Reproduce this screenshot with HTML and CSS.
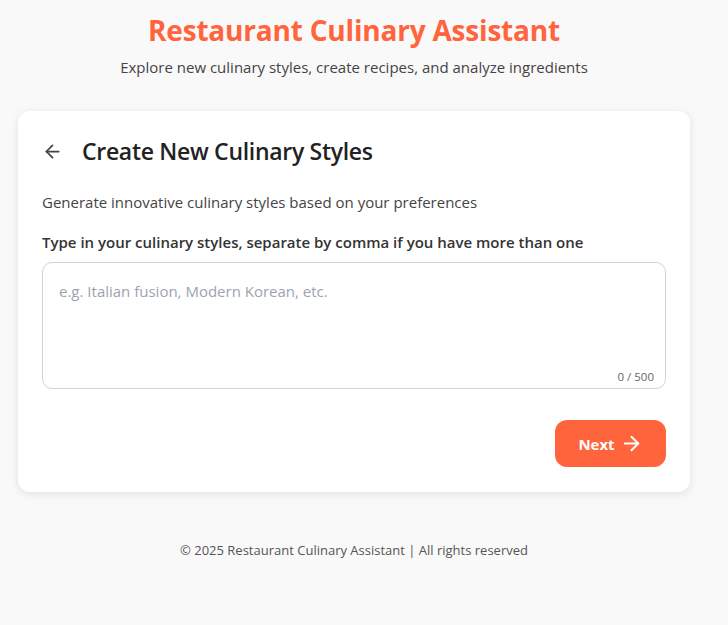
FILE: index.html
```html
<!DOCTYPE html>
<html lang="en">
<head>
<meta charset="utf-8">
<title>Restaurant Culinary Assistant</title>
<link rel="stylesheet" href="styles.css">
</head>
<body>
<div class="page">
  <header class="header">
    <h1 class="title">Restaurant Culinary Assistant</h1>
    <p class="subtitle">Explore new culinary styles, create recipes, and analyze ingredients</p>
  </header>
  <main class="card">
    <div class="card-head">
      <button class="back" aria-label="Back">
        <svg width="21" height="21" viewBox="0 0 24 24" fill="none" stroke="#444" stroke-width="2" stroke-linecap="round" stroke-linejoin="round"><path d="M19 12H5"/><path d="M12 19l-7-7 7-7"/></svg>
      </button>
      <h2 class="card-title">Create New Culinary Styles</h2>
    </div>
    <p class="desc">Generate innovative culinary styles based on your preferences</p>
    <label class="label" for="styles">Type in your culinary styles, separate by comma if you have more than one</label>
    <div class="field">
      <textarea id="styles" class="input" placeholder="e.g. Italian fusion, Modern Korean, etc."></textarea>
      <span class="counter">0 / 500</span>
    </div>
    <div class="actions">
      <button class="next">Next
        <svg width="23" height="23" viewBox="0 0 24 24" fill="none" stroke="#fff" stroke-width="2.1" stroke-linecap="round" stroke-linejoin="round"><path d="M5 12h14"/><path d="M12 5l7 7-7 7"/></svg>
      </button>
    </div>
  </main>
  <footer class="footer">© 2025 Restaurant Culinary Assistant | All rights reserved</footer>
</div>
</body>
</html>
```
FILE: styles.css
```css
* { box-sizing: border-box; }
html, body { margin: 0; padding: 0; }
body {
  background: #f9f9f9;
  font-family: "Open Sans", "Noto Sans", sans-serif;
  color: #333;
}
.page {
  width: 708px;
  padding: 0 18px;
}
.header {
  text-align: center;
  padding-top: 10px;
}
.title {
  margin: 0;
  font-size: 28px;
  line-height: 40px;
  font-weight: 700;
  color: #ff643c;
  letter-spacing: -0.2px;
}
.subtitle {
  margin: 6px 0 0;
  font-size: 15px;
  line-height: 22px;
  color: #444;
}
.card {
  margin-top: 33px;
  background: #fff;
  border-radius: 12px;
  box-shadow: 0 2px 8px rgba(0,0,0,0.1);
  padding: 22px 24px 25px;
}
.card-head {
  display: flex;
  align-items: center;
  gap: 19px;
  height: 36px;
}
.back {
  border: 0;
  background: none;
  padding: 0;
  display: flex;
  cursor: pointer;
}
.card-title {
  margin: 0;
  font-size: 23px;
  font-weight: 600;
  color: #222;
  letter-spacing: -0.3px;
}
.desc {
  margin: 22px 0 0;
  font-size: 15px;
  line-height: 22px;
  color: #444;
}
.label {
  display: block;
  margin-top: 18px;
  font-size: 15px;
  line-height: 22px;
  font-weight: 600;
  color: #333;
}
.field {
  position: relative;
  margin-top: 9px;
}
.input {
  display: block;
  width: 100%;
  height: 127px;
  border: 1px solid #d4d4d4;
  border-radius: 10px;
  padding: 18px 16px;
  font-family: inherit;
  font-size: 15px;
  resize: none;
  outline: none;
}
.input::placeholder { color: #9ca3af; }
.counter {
  position: absolute;
  right: 12px;
  bottom: 5px;
  font-size: 11.5px;
  color: #666;
}
.actions {
  display: flex;
  justify-content: flex-end;
  margin-top: 31px;
}
.next {
  display: flex;
  align-items: center;
  gap: 5px;
  height: 47px;
  width: 111px;
  justify-content: center;
  border: 0;
  border-radius: 12px;
  background: #ff643c;
  color: #fff;
  font-family: inherit;
  font-size: 15px;
  font-weight: 700;
  cursor: pointer;
}
.footer {
  text-align: center;
  margin-top: 49px;
  font-size: 13px;
  color: #555;
}
```
